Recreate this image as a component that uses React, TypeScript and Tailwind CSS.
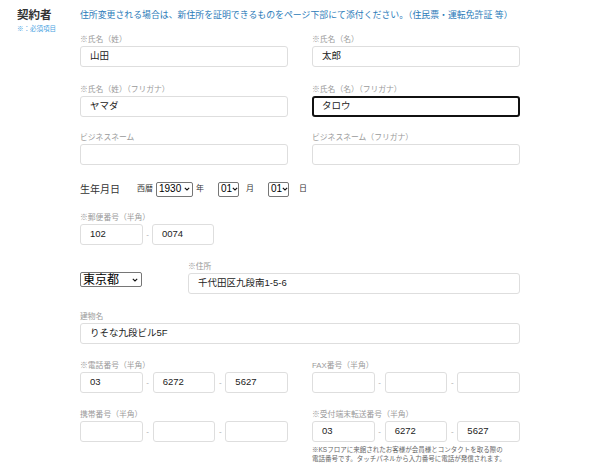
const font = {
  fontFamily: '"Liberation Sans", "Noto Sans CJK JP", sans-serif',
};

function Chevron() {
  return (
    <svg width="6" height="4" viewBox="0 0 6 4" className="shrink-0">
      <path d="M0.8 0.8 L3 3 L5.2 0.8" fill="none" stroke="#111" strokeWidth="1.1" />
    </svg>
  );
}

function FakeSelect({ value, className, textClass }: { value: string; className: string; textClass?: string }) {
  return (
    <div
      className={`flex items-center justify-between border border-[#767676] rounded-[2px] bg-white pl-[2px] pr-[2px] text-black ${className}`}
    >
      <span className={textClass ?? 'text-[10px] leading-none'}>{value}</span>
      <Chevron />
    </div>
  );
}

function Box({ value, focused, className }: { value?: string; focused?: boolean; className?: string }) {
  return (
    <div
      className={`h-[21px] flex items-center rounded-[3px] bg-white text-[9.5px] text-[#222] ${
        focused ? 'border-2 border-[#111] px-[8px]' : 'border border-[#dedede] px-[9px]'
      } ${className ?? ''}`}
    >
      {value}
    </div>
  );
}

function Label({ text }: { text: string }) {
  return <div className="h-[13px] text-[7.8px] leading-[13px] text-[#9a9a9a] whitespace-nowrap">{text}</div>;
}

function Field({ label, value, focused }: { label: string; value?: string; focused?: boolean }) {
  return (
    <div>
      <Label text={label} />
      <Box value={value} focused={focused} />
    </div>
  );
}

function Dash() {
  return <span className="w-[10px] text-center text-[8px] text-[#aaa]">-</span>;
}

function Triple({ label, values }: { label: string; values: string[] }) {
  return (
    <div>
      <Label text={label} />
      <div className="flex items-center">
        <Box value={values[0]} className="flex-1" />
        <Dash />
        <Box value={values[1]} className="flex-1" />
        <Dash />
        <Box value={values[2]} className="flex-1" />
      </div>
    </div>
  );
}

export default function App() {
  return (
    <div className="w-[600px] h-[469px] bg-white flex overflow-hidden" style={font}>
      <div className="w-[80px] pl-[17px] pt-[8px]">
        <div className="text-[11.5px] leading-[14px] font-semibold text-[#333]">契約者</div>
        <div className="mt-[2px] text-[6.5px] leading-[9px] text-[#4aa3df] whitespace-nowrap">※：必須項目</div>
      </div>

      <div className="w-[440px] flex flex-col">
        <div className="pt-[8px] text-[8.9px] leading-[14px] text-[#2b7bb9] whitespace-nowrap">
          住所変更される場合は、新住所を証明できるものをページ下部にて添付ください。（住民票・運転免許証 等）
        </div>

        <div className="mt-[11px] grid grid-cols-2 gap-x-[24px]">
          <Field label="※氏名（姓）" value="山田" />
          <Field label="※氏名（名）" value="太郎" />
        </div>

        <div className="mt-[16px] grid grid-cols-2 gap-x-[24px]">
          <Field label="※氏名（姓）（フリガナ）" value="ヤマダ" />
          <Field label="※氏名（名）（フリガナ）" value="タロウ" focused />
        </div>

        <div className="mt-[14px] grid grid-cols-2 gap-x-[24px]">
          <Field label="ビジネスネーム" />
          <Field label="ビジネスネーム（フリガナ）" />
        </div>

        <div className="mt-[16px] h-[16px] flex items-center text-[#333]">
          <span className="w-[57px] text-[10px]">生年月日</span>
          <span className="w-[19px] text-[8px]">西暦</span>
          <FakeSelect value="1930" className="w-[37px] h-[15px]" />
          <span className="ml-[3px] w-[22px] text-[8px]">年</span>
          <FakeSelect value="01" className="w-[21px] h-[15px] pl-[1px] pr-[1px]" />
          <span className="ml-[7px] w-[22px] text-[8px]">月</span>
          <FakeSelect value="01" className="w-[21px] h-[15px] pl-[1px] pr-[1px]" />
          <span className="ml-[10px] text-[8px]">日</span>
        </div>

        <div className="mt-[14px]">
          <Label text="※郵便番号（半角）" />
          <div className="flex items-center">
            <Box value="102" className="w-[63px]" />
            <span className="w-[9px] text-center text-[8px] text-[#aaa]">-</span>
            <Box value="0074" className="w-[62px]" />
          </div>
        </div>

        <div className="mt-[15px] flex">
          <FakeSelect
            value="東京都"
            className="mt-[12px] w-[62px] h-[15px] pr-[3px]"
            textClass="text-[12px] leading-none font-normal"
          />
          <div className="ml-[46px] flex-1">
            <Field label="※住所" value="千代田区九段南1-5-6" />
          </div>
        </div>

        <div className="mt-[16px]">
          <Field label="建物名" value="りそな九段ビル5F" />
        </div>

        <div className="mt-[15px] grid grid-cols-2 gap-x-[24px]">
          <Triple label="※電話番号（半角）" values={['03', '6272', '5627']} />
          <Triple label="FAX番号（半角）" values={['', '', '']} />
        </div>

        <div className="mt-[15px] grid grid-cols-2 gap-x-[24px]">
          <Triple label="携帯番号（半角）" values={['', '', '']} />
          <div>
            <Triple label="※受付端末転送番号（半角）" values={['03', '6272', '5627']} />
            <div className="mt-[3px] text-[6.5px] leading-[9px] text-[#666] whitespace-nowrap">
              <div>※KSフロアに来館されたお客様が会員様とコンタクトを取る際の</div>
              <div>電話番号です。タッチパネルから入力番号に電話が発信されます。</div>
            </div>
          </div>
        </div>
      </div>
    </div>
  );
}
